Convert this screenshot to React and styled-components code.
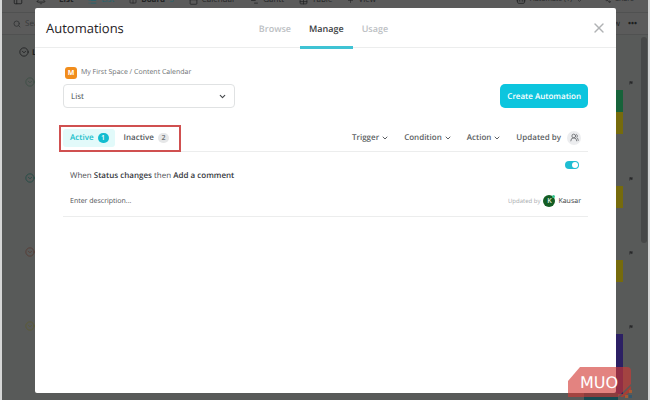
import React, { useState } from "react";
import styled, { createGlobalStyle } from "styled-components";
import {
  Search, Bell, PanelLeft, List, Columns2, Calendar, ChartNoAxesGantt, Table,
  Plus, Share2, Bot, ChevronDown, CircleChevronDown, X, UsersRound, Flag,
} from "lucide-react";

const Global = createGlobalStyle`
  *, *::before, *::after { box-sizing: border-box; }
  body { margin: 0; background: #d6d7d7; font-family: "Open Sans", "Noto Sans", sans-serif; color: #3b3e42; text-rendering: geometricPrecision; }
  button, input, select { font: inherit; color: inherit; margin: 0; padding: 0; border: 0; background: none; text-rendering: inherit; }
  button { cursor: pointer; }
`;

const Screen = styled.div`
  position: relative;
  min-height: 100vh;
  display: flex;
  padding: 0 2px;
  overflow: hidden;
`;

/* Dimmed workspace behind the dialog */
const Workspace = styled.div`
  flex: 1;
  min-width: 0;
  display: flex;
  flex-direction: column;
  background: #585a59;
  color: #1e1f20;
  font-size: 8px;
`;
const TopBar = styled.div`
  height: 13px;
  display: flex;
  align-items: flex-start;
  overflow: hidden;
  border-bottom: 1px solid #505151;
  background: #5b5b5b;
`;
const TopRow = styled.div`
  flex: 1;
  height: 16px;
  margin-top: -8px;
  padding: 0 14px 0 11px;
  display: flex;
  align-items: center;
  justify-content: space-between;
`;
const Group = styled.div`
  display: flex;
  align-items: center;
  gap: ${(p) => p.$gap || 15}px;
`;
const TopItem = styled.span`
  display: flex;
  align-items: center;
  gap: 4px;
  white-space: nowrap;
  line-height: 18px;
  font-size: ${(p) => (p.$small ? 7 : 8)}px;
  font-weight: ${(p) => (p.$bold ? 700 : 400)};
  color: ${(p) => (p.$active ? "#1f6570" : "#222324")};
`;
const ToolBar = styled.div`
  height: 22px;
  display: flex;
  align-items: center;
  justify-content: space-between;
  padding: 0 11px;
  border-bottom: 1px solid #505151;
  background: #5b5b5b;
`;
const SearchHint = styled.span`
  display: flex;
  align-items: center;
  gap: 4px;
  color: #37393a;
`;
const ListHead = styled.div`
  display: flex;
  align-items: center;
  gap: 3px;
  height: 37px;
  padding: 0 0 3px 17px;
  font-weight: 700;
`;
const BoardArea = styled.div`
  flex: 1;
  display: flex;
`;
const Groups = styled.div`
  flex: 1;
`;
const StatusGroup = styled.section`
  min-height: ${(p) => (p.$rows > 1 ? 96 : 74)}px;
  display: flex;
  justify-content: space-between;
  padding: 5px 8px 0 23px;
  color: ${(p) => p.$color};
`;
const Cells = styled.div`
  display: flex;
  align-items: flex-start;
  gap: 6px;
  color: #2b2c2d;
`;
const CellStack = styled.div`
  padding-top: 13px;
`;
const Cell = styled.div`
  width: 20px;
  height: ${(p) => (p.$tall ? 60 : 22)}px;
  background: ${(p) => p.$color};
`;
const FlagMark = styled.span`
  padding-top: 4px;
  line-height: 1;
  display: flex;
`;
const Scrollbar = styled.div`
  width: 6px;
  height: 206px;
  margin: 2px 1px 0 0;
  border-radius: 3px;
  background: #474848;
`;

/* Dialog */
const Overlay = styled.div`
  position: absolute;
  inset: 0;
  display: flex;
  padding: 8px 34px 7px 35px;
`;
const Dialog = styled.div`
  flex: 1;
  min-width: 0;
  display: flex;
  flex-direction: column;
  background: #fff;
  border-radius: 2px;
`;
const DialogHead = styled.header`
  display: grid;
  grid-template-columns: 1fr auto 1fr;
  align-items: stretch;
  height: 40px;
  padding: 0 9px 0 11px;
  border-bottom: 1px solid #eceded;
`;
const Title = styled.h1`
  margin: 0;
  font-size: 13px;
  line-height: 40px;
  font-weight: 400;
  color: #1f2226;
`;
const Tabs = styled.nav`
  display: flex;
  margin: 0 6px -1px 0;
`;
const Tab = styled.button`
  padding: 3px 9px 0;
  font-size: 9px;
  font-weight: 600;
  color: ${(p) => (p.$on ? "#3b3e42" : "#bcc0c3")};
  border-bottom: 3px solid ${(p) => (p.$on ? "#3fc3d4" : "transparent")};
`;
const CloseButton = styled.button`
  justify-self: end;
  align-self: center;
  display: flex;
  color: #b0b2b4;
`;
const DialogBody = styled.main`
  padding: 18px 28px;
`;
const Crumb = styled.div`
  display: flex;
  align-items: center;
  gap: 4px;
  height: 13px;
  margin: 0 2px 5px;
  font-size: 7px;
  color: #6d6f72;
`;
const SpaceBadge = styled.span`
  width: 12px;
  height: 12px;
  border-radius: 3px;
  background: #f18d1c;
  color: #fff;
  font-weight: 700;
  line-height: 13px;
  text-align: center;
`;
const Controls = styled.div`
  display: flex;
  justify-content: space-between;
  gap: 16px;
`;
const SelectBox = styled.label`
  position: relative;
  width: 172px;
  height: 24px;
  color: #44474b;
  svg { position: absolute; right: 8px; top: 8px; pointer-events: none; }
`;
const Select = styled.select`
  appearance: none;
  display: block;
  width: 100%;
  height: 100%;
  padding: 0 22px 0 7px;
  border: 1px solid #e0e2e3;
  border-radius: 4px;
  background: #fff;
  font-size: 8px;
`;
const Primary = styled.button`
  height: 24px;
  padding: 0 7px;
  border-radius: 5px;
  background: #0cc5de;
  color: #fff;
  font-size: 8px;
  font-weight: 600;
  white-space: nowrap;
`;
const FilterBar = styled.div`
  display: flex;
  align-items: center;
  justify-content: space-between;
  height: 28px;
  margin-top: 16px;
  border-bottom: 1px solid #eceded;
`;
const StateTabs = styled.div`
  position: relative;
  display: flex;
  gap: 2px;
`;
const Highlight = styled.span`
  position: absolute;
  inset: -4px -6px -5px -4px;
  border: 2px solid #d05050;
  pointer-events: none;
`;
const StateTab = styled.button`
  display: flex;
  align-items: center;
  gap: 4px;
  height: 18px;
  padding: 0 6px 0 7px;
  border-radius: 3px;
  font-size: 8px;
  font-weight: 600;
  background: ${(p) => (p.$on ? "#e2fafa" : "transparent")};
  color: ${(p) => (p.$on ? "#20bfcb" : "#55585c")};
`;
const Count = styled.span`
  min-width: 11px;
  height: 10px;
  border-radius: 5px;
  font-size: 7px;
  line-height: 11px;
  text-align: center;
  background: ${(p) => (p.$on ? "#12bdd0" : "#e6e7e8")};
  color: ${(p) => (p.$on ? "#fff" : "#6b6e72")};
`;
const Filters = styled.div`
  display: flex;
  align-items: center;
  gap: 15px;
  padding-right: 7px;
`;
const Filter = styled.button`
  display: flex;
  align-items: center;
  gap: ${(p) => p.$gap || 2}px;
  font-size: 8px;
  font-weight: 600;
  color: #5c5f63;
`;
const People = styled.span`
  width: 14px;
  height: 14px;
  border-radius: 50%;
  background: #ecedef;
  display: grid;
  place-items: center;
`;
const Automation = styled.article`
  display: grid;
  grid-template-columns: 1fr auto;
  align-content: start;
  padding: 8px 7px 8px;
  border-bottom: 1px solid #eceded;
`;
const Rule = styled.p`
  margin: 0;
  padding-top: 10px;
  font-size: 8px;
  line-height: 12px;
  color: #4d5054;
  b { font-weight: 600; color: #36393d; }
`;
const Toggle = styled.input`
  appearance: none;
  justify-self: end;
  width: 14px;
  height: 8px;
  margin: 1px 2px 0 0;
  border-radius: 4px;
  background: ${(p) => (p.checked ? "#1fbdd2" : "#c4c7c9")};
  cursor: pointer;
  &::before {
    content: "";
    display: block;
    width: 6px;
    height: 6px;
    margin: 1px;
    margin-left: ${(p) => (p.checked ? 7 : 1)}px;
    border-radius: 50%;
    background: #fff;
  }
`;
const Description = styled.input`
  margin-top: 12px;
  height: 14px;
  font-size: 7px;
  outline: 0;
  &::placeholder { color: #4f5256; opacity: 1; }
`;
const Author = styled.div`
  display: flex;
  align-items: center;
  gap: 3px;
  margin-top: 12px;
  height: 14px;
  font-size: 7px;
  color: #36393d;
`;
const Muted = styled.span`
  font-size: 6px;
  color: #a8abae;
`;
const Avatar = styled.span`
  position: relative;
  width: 12px;
  height: 12px;
  border-radius: 50%;
  background: #135d24;
  color: #e6f3e0;
  font-weight: 600;
  line-height: 13px;
  text-align: center;
  &::after {
    content: "";
    position: absolute;
    right: 0;
    top: 0;
    width: 3px;
    height: 3px;
    border-radius: 50%;
    background: #35c48e;
  }
`;
const Watermark = styled.svg`
  position: absolute;
  right: 18px;
  bottom: 0;
  width: 65px;
  height: 34px;
`;

const groups = [
  { color: "#3c4f44", cells: ["#17633a", "#766b0c"] },
  { color: "#204c45", cells: ["#766b0c"] },
  { color: "#583b33", cells: ["#766b0c"] },
  { color: "#5d5b31", cells: ["#2c2064"], tall: true },
];

function Backdrop() {
  return (
    <Workspace aria-hidden="true">
      <TopBar>
        <TopRow>
          <Group>
            <Group $gap={13}>
              <PanelLeft size={10} />
              <Bell size={10} />
              <TopItem $bold>List</TopItem>
            </Group>
            <TopItem $active><List size={9} />List</TopItem>
            <TopItem $bold><Columns2 size={8} />Board <TopItem $active>5</TopItem></TopItem>
            <TopItem><Calendar size={9} />Calendar</TopItem>
            <TopItem><ChartNoAxesGantt size={9} />Gantt</TopItem>
            <TopItem><Table size={9} />Table</TopItem>
            <TopItem><Plus size={7} />View</TopItem>
          </Group>
          <Group $gap={22}>
            <TopItem $small><Bot size={10} />Automate (1)<ChevronDown size={7} /></TopItem>
            <TopItem $small><Share2 size={6} />Share</TopItem>
          </Group>
        </TopRow>
      </TopBar>
      <ToolBar>
        <SearchHint><Search size={8} strokeWidth={3} />Search</SearchHint>
        <Group $gap={8}><span>Show</span><b>•••</b></Group>
      </ToolBar>
      <BoardArea>
        <Groups>
          <ListHead><CircleChevronDown size={10} />List</ListHead>
          {groups.map((g, i) => (
            <StatusGroup key={i} $rows={g.cells.length} $color={g.color}>
              <CircleChevronDown size={10} />
              <Cells>
                <CellStack>
                  {g.cells.map((c) => <Cell key={c} $color={c} $tall={g.tall} />)}
                </CellStack>
                <FlagMark><Flag size={4} fill="currentColor" /></FlagMark>
              </Cells>
            </StatusGroup>
          ))}
        </Groups>
        <Scrollbar />
      </BoardArea>
    </Workspace>
  );
}

export default function App() {
  const [tab, setTab] = useState("Manage");
  const [state, setState] = useState("Active");
  const [enabled, setEnabled] = useState(true);
  return (
    <Screen>
      <Global />
      <Backdrop />
      <Overlay>
        <Dialog role="dialog" aria-labelledby="title">
          <DialogHead>
            <Title id="title">Automations</Title>
            <Tabs>
              {["Browse", "Manage", "Usage"].map((t) => (
                <Tab key={t} $on={t === tab} onClick={() => setTab(t)}>{t}</Tab>
              ))}
            </Tabs>
            <CloseButton aria-label="Close"><X size={16} strokeWidth={2} /></CloseButton>
          </DialogHead>
          <DialogBody>
            <Crumb><SpaceBadge>M</SpaceBadge>My First Space / Content Calendar</Crumb>
            <Controls>
              <SelectBox>
                <Select aria-label="Location"><option>List</option></Select>
                <ChevronDown size={9} strokeWidth={3} />
              </SelectBox>
              <Primary>Create Automation</Primary>
            </Controls>
            <FilterBar>
              <StateTabs>
                {[["Active", 1], ["Inactive", 2]].map(([name, n]) => (
                  <StateTab key={name} $on={name === state} onClick={() => setState(name)}>
                    {name}<Count $on={name === state}>{n}</Count>
                  </StateTab>
                ))}
                <Highlight />
              </StateTabs>
              <Filters>
                {["Trigger", "Condition", "Action"].map((f) => (
                  <Filter key={f}>{f}<ChevronDown size={8} strokeWidth={3} /></Filter>
                ))}
                <Filter $gap={6}>Updated by<People><UsersRound size={9} /></People></Filter>
              </Filters>
            </FilterBar>
            <Automation>
              <Rule>When <b>Status changes</b> then <b>Add a comment</b></Rule>
              <Toggle type="checkbox" aria-label="Automation enabled" checked={enabled}
                onChange={(e) => setEnabled(e.target.checked)} />
              <Description aria-label="Description" placeholder="Enter description..." />
              <Author><Muted>Updated by</Muted><Avatar>K</Avatar>Kausar</Author>
            </Automation>
          </DialogBody>
        </Dialog>
      </Overlay>
      <Watermark viewBox="0 0 65 34" aria-label="MUO">
        <path d="M17 27H51V34H17Z" fill="#174b52" />
        <path d="M13 1H60Q64 1 64 5V18L51 31H1V15Z" fill="#d23732" fillOpacity=".62" />
        <path d="M64 20V25L56 31H53Z" fill="#a83e35" />
        <path d="M58 29h3v3h-3zM62 24h3v3h-3z" fill="#a75a32" />
        <path d="M62 29h3v3h-3z" fill="#35586e" />
        <text x="13" y="22" fill="#fff" fontFamily="DejaVu Sans" fontSize="16">MUO</text>
      </Watermark>
    </Screen>
  );
}
